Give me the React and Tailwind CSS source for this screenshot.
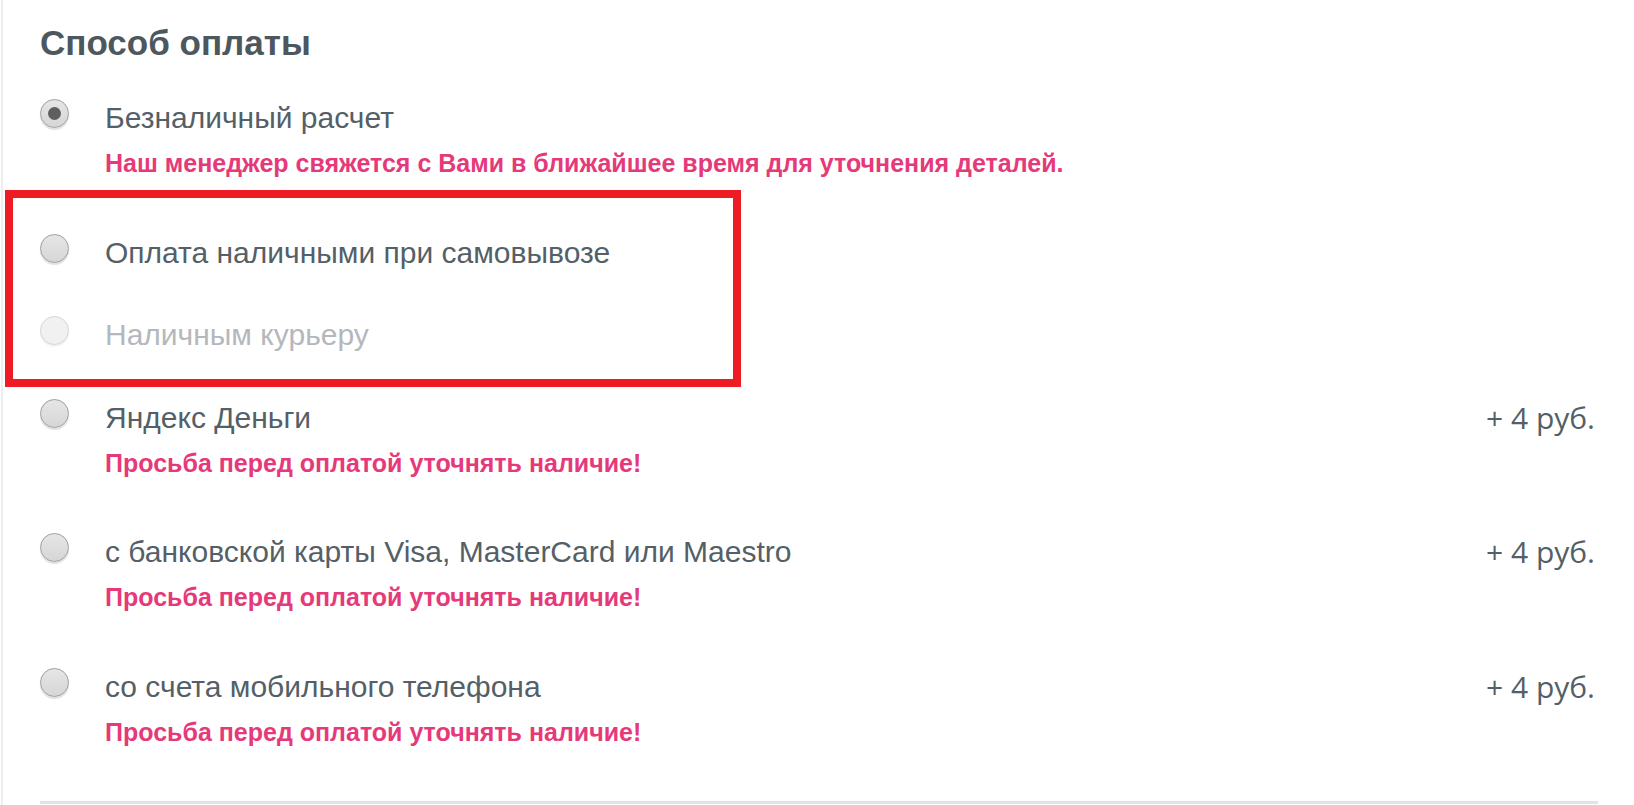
const options = [
  {
    label: "Безналичный расчет",
    checked: true,
    note: "Наш менеджер свяжется с Вами в ближайшее время для уточнения деталей.",
  },
  { label: "Оплата наличными при самовывозе" },
  { label: "Наличным курьеру", disabled: true },
  { label: "Яндекс Деньги", price: "+ 4 руб.", note: "Просьба перед оплатой уточнять наличие!" },
  {
    label: "с банковской карты Visa, MasterCard или Maestro",
    price: "+ 4 руб.",
    note: "Просьба перед оплатой уточнять наличие!",
  },
  { label: "со счета мобильного телефона", price: "+ 4 руб.", note: "Просьба перед оплатой уточнять наличие!" },
];

function Radio({ checked, disabled }) {
  if (disabled) {
    return (
      <span className="mt-[2px] flex h-[29px] w-[29px] items-center justify-center rounded-full border-[1.5px] border-[#d6d6d6] bg-[#f1f1f1] shadow-[0_2px_1px_rgba(0,0,0,0.05)]" />
    );
  }
  return (
    <span className="mt-[2px] flex h-[29px] w-[29px] items-center justify-center rounded-full border-[1.5px] border-[#9e9e9e] bg-gradient-to-b from-[#e6e6e6] to-[#d6d6d6] shadow-[0_2px_1px_rgba(0,0,0,0.12)]">
      {checked && <span className="h-[13px] w-[13px] rounded-full bg-[#5f5f5f]" />}
    </span>
  );
}

function Option({ label, checked, disabled, note, price }) {
  return (
    <div className={note ? "flex pb-[14px]" : "flex"}>
      <div className="w-[65px] shrink-0">
        <Radio checked={checked} disabled={disabled} />
      </div>
      <div className="flex-1">
        <div className="flex items-start justify-between">
          <span
            className={
              "text-[30px] leading-[42px] " + (disabled ? "text-[#b4b8bc]" : "text-[#545f67]")
            }
          >
            {label}
          </span>
          {price && (
            <span className="pr-[3px] font-['Open_Sans',sans-serif] text-[30px] leading-[42px] text-[#545f67]">
              {price}
            </span>
          )}
        </div>
        {note && (
          <div className="mt-[10px] text-[25px] font-bold leading-[28px] text-[#e6397a]">{note}</div>
        )}
      </div>
    </div>
  );
}

export default function App() {
  return (
    <main className="relative h-[805px] w-[1634px] overflow-hidden bg-white font-['Liberation_Sans',Arial,sans-serif]">
      <div className="ml-[1px] h-full border-l-2 border-[#eeeeee] pl-[37px] pr-[36px] pt-[23px]">
        <h2 className="text-[35px] font-bold leading-[40px] text-[#4c575e]">Способ оплаты</h2>
        <div className="mt-[34px] flex flex-col gap-[40.6px]">
          {options.map((o) => (
            <Option key={o.label} {...o} />
          ))}
        </div>
        <div className="mt-[41px] h-[3px] bg-[#e3e3e3]" />
      </div>
      {/* highlight frame */}
      <div className="absolute left-[5px] top-[190px] h-[197px] w-[736px] border-8 border-[#ed1c24]" />
    </main>
  );
}
